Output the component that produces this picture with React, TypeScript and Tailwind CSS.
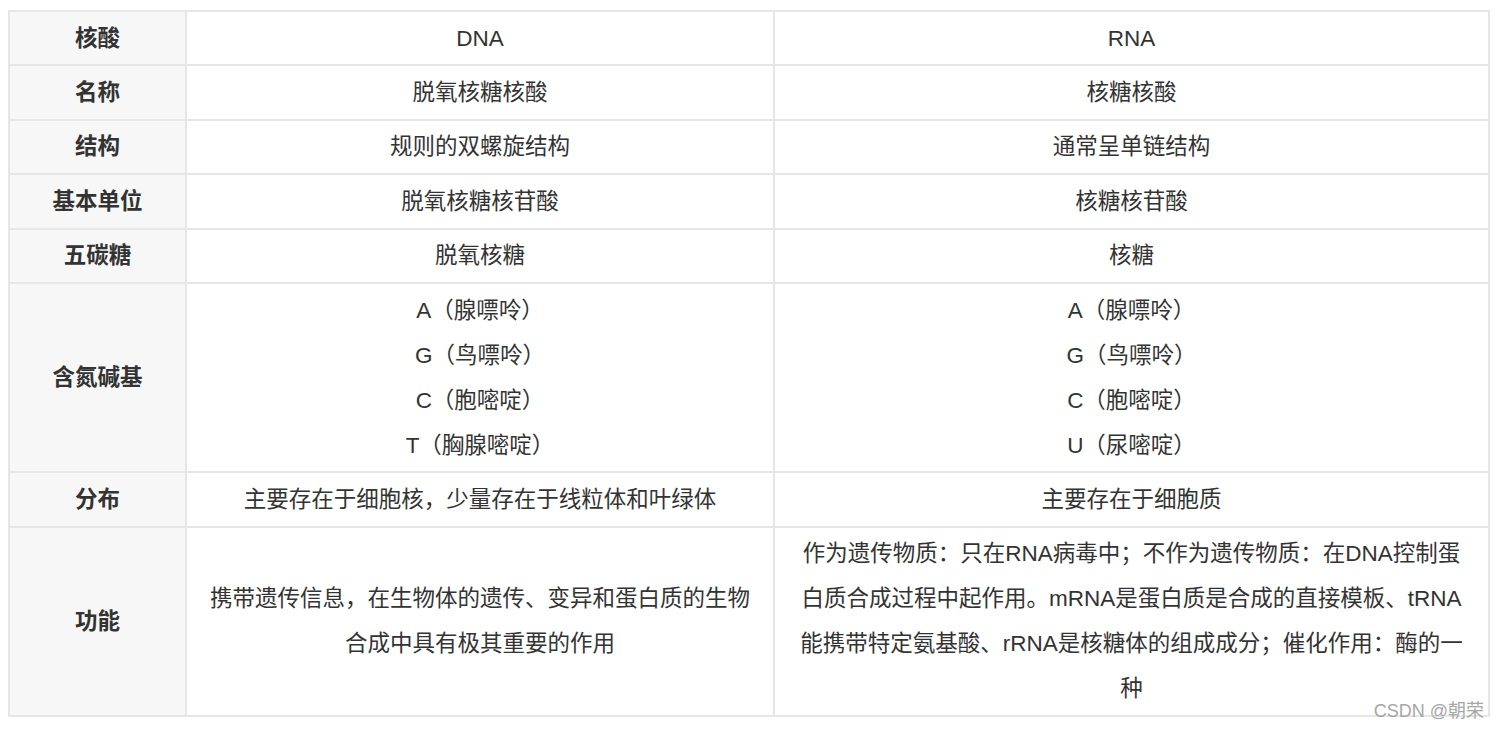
const rows: { label: string; dna: string[]; rna: string[] }[] = [
  { label: "核酸", dna: ["DNA"], rna: ["RNA"] },
  { label: "名称", dna: ["脱氧核糖核酸"], rna: ["核糖核酸"] },
  { label: "结构", dna: ["规则的双螺旋结构"], rna: ["通常呈单链结构"] },
  { label: "基本单位", dna: ["脱氧核糖核苷酸"], rna: ["核糖核苷酸"] },
  { label: "五碳糖", dna: ["脱氧核糖"], rna: ["核糖"] },
  {
    label: "含氮碱基",
    dna: ["A（腺嘌呤）", "G（鸟嘌呤）", "C（胞嘧啶）", "T（胸腺嘧啶）"],
    rna: ["A（腺嘌呤）", "G（鸟嘌呤）", "C（胞嘧啶）", "U（尿嘧啶）"],
  },
  { label: "分布", dna: ["主要存在于细胞核，少量存在于线粒体和叶绿体"], rna: ["主要存在于细胞质"] },
  {
    label: "功能",
    dna: ["携带遗传信息，在生物体的遗传、变异和蛋白质的生物合成中具有极其重要的作用"],
    rna: [
      "作为遗传物质：只在RNA病毒中；不作为遗传物质：在DNA控制蛋白质合成过程中起作用。mRNA是蛋白质是合成的直接模板、tRNA能携带特定氨基酸、rRNA是核糖体的组成成分；催化作用：酶的一种",
    ],
  },
];

function Cell({ lines, pad }: { lines: string[]; pad: string }) {
  return (
    <div className={`flex flex-col items-center justify-center bg-white py-[3.7px] text-center ${pad}`}>
      {lines.map((l, i) => (
        <p key={i}>{l}</p>
      ))}
    </div>
  );
}

export default function App() {
  return (
    <div
      className="relative h-[730px] w-[1498px] bg-white text-[22.5px] leading-[45px] text-[#333333]"
      style={{ fontFamily: '"Liberation Sans", "Noto Sans CJK SC", sans-serif' }}
    >
      <div className="ml-[8px] pt-[10px]">
        <div className="grid w-[1482px] grid-cols-[175px_586px_713px] gap-[2px] bg-[#e6e6e6] p-[2px]">
          {rows.map((r) => (
            <div key={r.label} className="contents">
              <div className="flex items-center justify-center bg-[#f7f7f7] py-[3.7px] font-bold">
                {r.label}
              </div>
              <Cell lines={r.dna} pad="px-[22px]" />
              <Cell lines={r.rna} pad="px-[24px]" />
            </div>
          ))}
        </div>
      </div>
      {/* watermark */}
      <div className="absolute right-[14px] top-[697px] text-[18px] leading-[28px] text-[#a6a6a6]">
        CSDN @朝荣
      </div>
    </div>
  );
}
